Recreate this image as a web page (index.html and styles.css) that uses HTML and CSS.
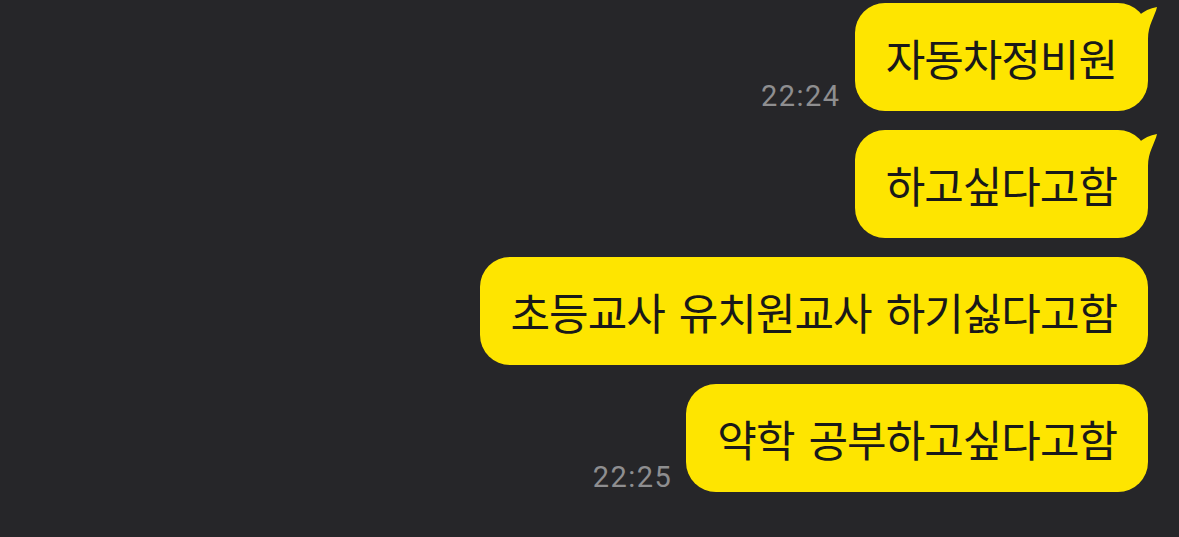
FILE: index.html
```html
<!DOCTYPE html>
<html lang="ko">
<head>
    <meta charset="UTF-8">
    <meta name="viewport" content="width=device-width, initial-scale=1.0">
    <title>채팅</title>
    <link rel="stylesheet" href="styles.css">
</head>
<body>

    <div class="chat">
        <div class="row">
            <span class="time">22:24</span>
            <div class="bubble">
                자동차정비원
                <svg class="horn" viewBox="0 0 42 40" width="42" height="40">
                    <path d="M20 13 C26 8 32 5 39 4 C37 13 30 22 30 36 L20 36 Z"/>
                </svg>
            </div>
        </div>
        <div class="row">
            <div class="bubble">
                하고싶다고함
                <svg class="horn" viewBox="0 0 42 40" width="42" height="40">
                    <path d="M20 13 C26 8 32 5 39 4 C37 13 30 22 30 36 L20 36 Z"/>
                </svg>
            </div>
        </div>
        <div class="row">
            <div class="bubble">초등교사 유치원교사 하기싫다고함</div>
        </div>
        <div class="row">
            <span class="time">22:25</span>
            <div class="bubble">약학 공부하고싶다고함</div>
        </div>
    </div>

</body>
</html>
```

FILE: styles.css
```css
body {
    margin: 0;
    background-color: #262629;
    font-family: "Noto Sans CJK KR", "Noto Sans", sans-serif;
}

/* Message list, right aligned like sent messages */
.chat {
    display: flex;
    flex-direction: column;
    align-items: flex-end;
    gap: 19px;
    padding: 3px 31px 0 0;
}

.row {
    display: flex;
    align-items: flex-end;
    gap: 14px;
}

.time {
    font-family: Roboto, "Noto Sans", sans-serif;
    font-size: 29px;
    letter-spacing: 1.5px;
    line-height: 30px;
    color: #8e8e90;
}

/* Yellow speech bubble */
.bubble {
    position: relative;
    height: 108px;
    line-height: 108px;
    padding: 0 31px;
    border-radius: 30px;
    background-color: #fee500;
    color: #191919;
    font-size: 43px;
    letter-spacing: -1px;
    word-spacing: 3px;
    white-space: nowrap;
}

.horn {
    position: absolute;
    top: 0;
    right: -12px;
    fill: #fee500;
}
```
